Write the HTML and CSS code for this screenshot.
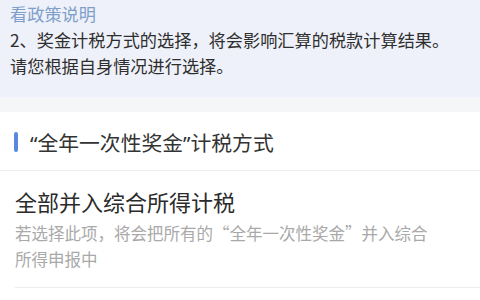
FILE: index.html
```html
<!DOCTYPE html>
<html lang="zh-CN">
<head>
<meta charset="utf-8">
<link rel="stylesheet" href="styles.css">
</head>
<body>
<div class="notice">
  <div class="link">看政策说明</div>
  <div class="line">2、奖金计税方式的选择，将会影响汇算的税款计算结果。</div>
  <div class="line">请您根据自身情况进行选择。</div>
</div>
<div class="band"></div>
<div class="section-head">
  <span class="bar"></span>
  <span class="head-text">“全年一次性奖金”计税方式</span>
</div>
<div class="item">
  <div class="item-title">全部并入综合所得计税</div>
  <div class="item-desc">若选择此项，将会把所有的“全年一次性奖金”并入综合所得申报中</div>
</div>
</body>
</html>
```

FILE: styles.css
```css
html, body {
  margin: 0;
  padding: 0;
  background: #ffffff;
  font-family: "Noto Sans CJK SC", "Noto Sans", sans-serif;
}
.notice {
  background: #eef1f9;
  height: 97px;
  padding: 1px 0 0 10px;
  box-sizing: border-box;
  font-size: 17.2px;
  line-height: 26px;
  color: #2e2e2e;
}
.link {
  color: #7f9fca;
}
.band {
  height: 15px;
  background: #f5f6f8;
}
.section-head {
  display: flex;
  align-items: center;
  height: 59px;
  border-bottom: 1px solid #ececec;
  padding-left: 14px;
  padding-top: 1px;
  box-sizing: border-box;
}
.bar {
  width: 4px;
  height: 20px;
  border-radius: 2px;
  background: #5b87de;
  margin-right: 12px;
}
.head-text {
  font-family: "Noto Sans", "Noto Sans CJK SC", sans-serif;
  font-size: 20.8px;
  color: #333333;
}
.item {
  margin-left: 15px;
  padding: 16px 0 15px 0;
  border-bottom: 1px solid #ececec;
}
.item-title {
  font-size: 22px;
  line-height: 28px;
  color: #2b2b2b;
}
.item-desc {
  margin-top: 5px;
  width: 420px;
  font-size: 16.5px;
  line-height: 26px;
  color: #a9a9a9;
}
```
